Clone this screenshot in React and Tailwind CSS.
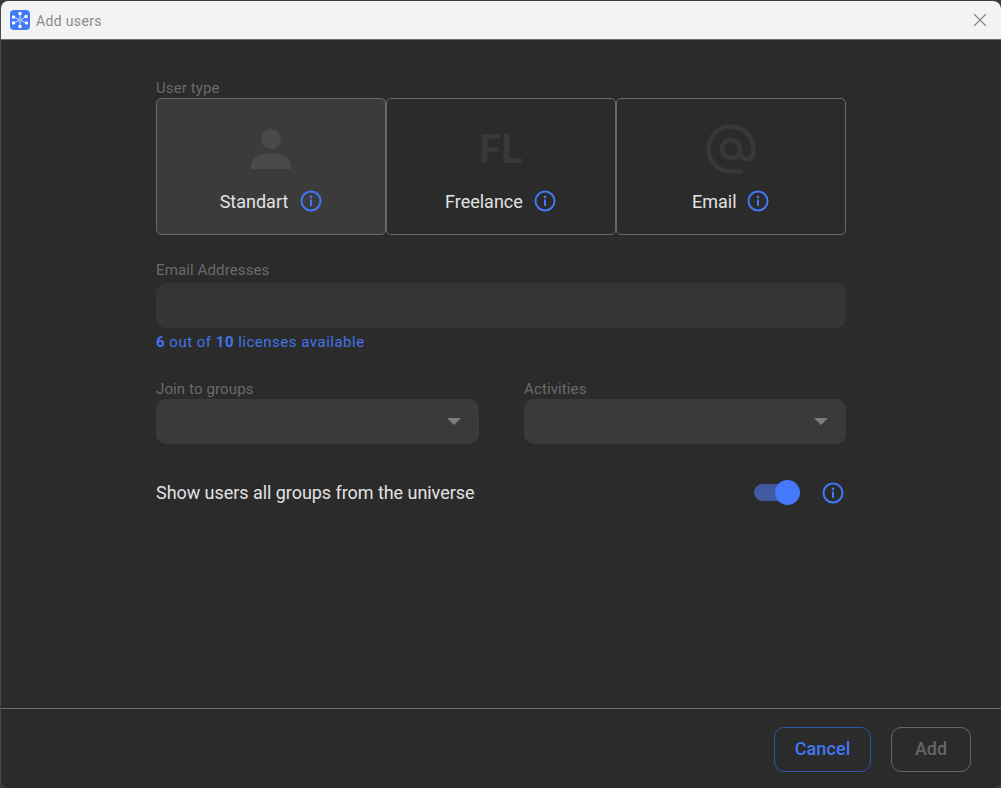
function Info({ className = "" }) {
  return (
    <svg width="22" height="22" viewBox="0 0 22 22" fill="none" className={className}>
      <circle cx="11" cy="11" r="9.5" stroke="#4079f5" strokeWidth="2" />
      <circle cx="11" cy="6.9" r="1.3" fill="#4079f5" />
      <rect x="10" y="9.4" width="2" height="6.6" fill="#4079f5" />
    </svg>
  );
}
function Logo() {
  const pts = [[10,3.5],[16,6.5],[16.5,13],[10,16.5],[3.5,13],[3.5,7]];
  return (
    <svg width="20" height="20" viewBox="0 0 20 20" className="shrink-0">
      <rect width="20" height="20" rx="4" fill="#4279fb" />
      {pts.map(([x, y], i) => (
        <g key={i}>
          <line x1="10" y1="10" x2={x} y2={y} stroke="#dbe6ff" strokeWidth="0.9" />
          <circle cx={x} cy={y} r="1.7" fill="#fff" />
        </g>
      ))}
      <circle cx="10" cy="10" r="1.3" fill="#4279fb" stroke="#dbe6ff" strokeWidth="0.7" />
    </svg>
  );
}
function Card({ icon, label, active, gapClass, rowClass }) {
  return (
    <div className={`relative w-[230px] h-[137px] rounded-[5px] border border-[#6a6a6a] ${active ? "bg-[#3b3b3b]" : "bg-[#2b2b2b]"}`}>
      {icon}
      <div className={`absolute top-[91px] flex items-center justify-center h-[22px] ${rowClass}`}>
        <span className="pt-[1px] text-[18px] leading-[22px] text-[#e2e2e2]">{label}</span>
        <Info className={gapClass} />
      </div>
    </div>
  );
}
function Select({ className }) {
  return (
    <div className={`h-[45px] rounded-[10px] bg-[#3a3a3a] ${className}`}>
      <svg width="14" height="7" viewBox="0 0 14 7" className="absolute right-[18px] top-[19px]">
        <path d="M0 0H14L7 7Z" fill="#7d7d7d" />
      </svg>
    </div>
  );
}
const label = "text-[15px] leading-[16px] tracking-[0.12px] text-[#6a6a6a]";
export default function App() {
  return (
    <div className="relative w-[1001px] h-[788px] overflow-hidden bg-[#3a3a3a] [font-family:Roboto,sans-serif]">
      <div className="absolute left-0 top-[1px] w-[1001px] h-[787px] rounded-[8px] overflow-hidden bg-[#2b2b2b] border-l border-[#4a4a4a]">
        <div className="h-[38px] bg-[#f3f3f3] border-b border-[#6e6e6e] flex items-center pl-[10px] relative box-content -ml-px">
          <Logo />
          <span className="ml-[6px] pt-[2px] text-[14px] text-[#8a8a8a] tracking-[0.35px]">Add users</span>
          <svg width="14" height="14" viewBox="0 0 14 14" className="absolute left-[973px] top-[12px]">
            <path d="M1 1L13 13M13 1L1 13" stroke="#8a8a8a" strokeWidth="1.2" />
          </svg>
        </div>
        <div className={`absolute left-[155px] top-[79px] ${label}`}>User type</div>
        <div className="absolute left-[155px] top-[97px] flex">
          <Card
            active
            label="Standart"
            gapClass="ml-[12px]"
            rowClass="left-0 right-0"
            icon={
              <svg width="42" height="42" viewBox="0 0 42 42" className="absolute left-[93px] top-[29px]">
                <circle cx="21" cy="11" r="10" fill="#4a4a4a" />
                <path d="M1 41V37C1 30 11 25 21 25S41 30 41 37V41Z" fill="#4a4a4a" />
              </svg>
            }
          />
          <Card
            label="Freelance"
            gapClass="ml-[11px]"
            rowClass="left-[58px]"
            icon={
              <div className="absolute left-[92px] top-[27px] text-[39px] leading-[46px] font-bold text-[#383838] [font-family:Inter,sans-serif] tracking-[-1px]">FL</div>
            }
          />
          <Card
            label="Email"
            gapClass="ml-[10px]"
            rowClass="left-[75px]"
            icon={
              <svg width="50" height="50" viewBox="0 0 50 50" className="absolute left-[89px] top-[25px]">
                <path d="M37 47.5H25A22.5 22.5 0 1 1 47.5 25V28.5A6.75 6.75 0 0 1 34 28.5V25" fill="none" stroke="#383838" strokeWidth="4.6" />
                <circle cx="25" cy="25" r="9" fill="none" stroke="#383838" strokeWidth="4.6" />
              </svg>
            }
          />
        </div>
        <div className={`absolute left-[155px] top-[261px] ${label}`}>Email Addresses</div>
        <div className="absolute left-[155px] top-[282px] w-[690px] h-[45px] rounded-[10px] bg-[#353535]" />
        <div className="absolute left-[155px] top-[333px] text-[15px] leading-[16px] tracking-[0.5px] text-[#4175e8]">
          <b className="font-bold">6</b> out of <b className="font-bold">10</b> licenses available
        </div>
        <div className={`absolute left-[155px] top-[380px] ${label}`}>Join to groups</div>
        <div className={`absolute left-[523px] top-[380px] ${label}`}>Activities</div>
        <Select className="absolute left-[155px] top-[398px] w-[323px]" />
        <Select className="absolute left-[523px] top-[398px] w-[322px]" />
        <div className="absolute left-[155px] top-[481px] text-[18px] leading-[22px] tracking-[-0.05px] text-[#e2e2e2]">Show users all groups from the universe</div>
        <div className="absolute left-[753px] top-[483px] w-[42px] h-[17px] rounded-full bg-[#40599f]" />
        <div className="absolute left-[774px] top-[479px] w-[25px] h-[25px] rounded-full bg-[#4479fb]" />
        <Info className="absolute left-[821px] top-[481px]" />
        <div className="absolute left-0 top-[707px] w-full h-px bg-[#6e6e6e]" />
        <div className="absolute left-[773px] top-[726px] w-[97px] h-[45px] pb-[2px] rounded-[10px] border border-[#2f56ad] flex items-center justify-center text-[18px] tracking-[0.1px] font-medium text-[#4079f5]">Cancel</div>
        <div className="absolute left-[890px] top-[726px] w-[80px] h-[45px] pb-[2px] rounded-[10px] border border-[#666666] flex items-center justify-center text-[18px] font-medium text-[#666666]">Add</div>
      </div>
    </div>
  );
}
